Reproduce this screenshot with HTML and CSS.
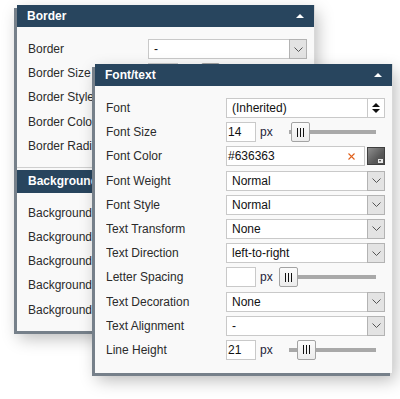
FILE: index.html
```html
<!DOCTYPE html>
<html>
<head>
<meta charset="utf-8">
<link rel="stylesheet" href="styles.css">
</head>
<body>
<div class="desk">

  <section class="panel panel-back">
    <header class="panel-head"><span>Border</span><i class="collapse"></i></header>
    <div class="panel-body panel-body-split">
      <div class="row"><label>Border</label>
        <div class="select"><span class="val">-</span><span class="arrow"><svg width="9" height="5" viewBox="0 0 9 5"><polyline points="0.5,0.5 4.5,4.5 8.5,0.5" fill="none" stroke="#555" stroke-width="1"/></svg></span></div>
      </div>
      <div class="row"><label>Border Size</label>
        <div class="num"><span class="input input-sm"></span><span class="unit">px</span>
          <span class="slider"><span class="track"></span><span class="thumb" style="left:-10px"><svg width="7" height="9" viewBox="0 0 7 9"><path d="M0.5 0v9M3.5 0v9M6.5 0v9" stroke="#111" stroke-width="1"/></svg></span></span></div>
      </div>
      <div class="row"><label>Border Style</label>
        <div class="select"><span class="val">None</span><span class="arrow"><svg width="9" height="5" viewBox="0 0 9 5"><polyline points="0.5,0.5 4.5,4.5 8.5,0.5" fill="none" stroke="#555" stroke-width="1"/></svg></span></div>
      </div>
      <div class="row"><label>Border Color</label>
        <div class="color"><span class="input input-color"><span class="val"></span></span><span class="swatch"><i></i></span></div>
      </div>
      <div class="row"><label>Border Radius</label>
        <div class="num"><span class="input input-sm"></span><span class="unit">px</span>
          <span class="slider"><span class="track"></span><span class="thumb" style="left:-10px"><svg width="7" height="9" viewBox="0 0 7 9"><path d="M0.5 0v9M3.5 0v9M6.5 0v9" stroke="#111" stroke-width="1"/></svg></span></span></div>
      </div>
    </div>
    <header class="panel-head panel-head-sub"><span>Background</span></header>
    <div class="panel-body panel-body-bg">
      <div class="row"><label>Background Color</label>
        <div class="color"><span class="input input-color"><span class="val"></span></span><span class="swatch"><i></i></span></div>
      </div>
      <div class="row"><label>Background Image</label>
        <div class="select"><span class="val">None</span><span class="arrow"><svg width="9" height="5" viewBox="0 0 9 5"><polyline points="0.5,0.5 4.5,4.5 8.5,0.5" fill="none" stroke="#555" stroke-width="1"/></svg></span></div>
      </div>
      <div class="row"><label>Background Repeat</label>
        <div class="select"><span class="val">-</span><span class="arrow"><svg width="9" height="5" viewBox="0 0 9 5"><polyline points="0.5,0.5 4.5,4.5 8.5,0.5" fill="none" stroke="#555" stroke-width="1"/></svg></span></div>
      </div>
      <div class="row"><label>Background Position</label>
        <div class="select"><span class="val">-</span><span class="arrow"><svg width="9" height="5" viewBox="0 0 9 5"><polyline points="0.5,0.5 4.5,4.5 8.5,0.5" fill="none" stroke="#555" stroke-width="1"/></svg></span></div>
      </div>
      <div class="row"><label>Background Attachment</label>
        <div class="select"><span class="val">-</span><span class="arrow"><svg width="9" height="5" viewBox="0 0 9 5"><polyline points="0.5,0.5 4.5,4.5 8.5,0.5" fill="none" stroke="#555" stroke-width="1"/></svg></span></div>
      </div>
    </div>
  </section>

  <section class="panel panel-front">
    <header class="panel-head"><span>Font/text</span><i class="collapse"></i></header>
    <div class="panel-body panel-body-front">
      <div class="row"><label>Font</label>
        <div class="select select-plain"><span class="val val-font">(Inherited)</span><span class="arrow arrow-plain"><svg width="8" height="10" viewBox="0 0 8 10"><polygon points="0,4 4,0 8,4" fill="#111"/><polygon points="0,6 8,6 4,10" fill="#111"/></svg></span></div>
      </div>
      <div class="row"><label>Font Size</label>
        <div class="num"><span class="input input-sm">14</span><span class="unit">px</span>
          <span class="slider"><span class="track"></span><span class="thumb" style="left:2px"><svg width="7" height="9" viewBox="0 0 7 9"><path d="M0.5 0v9M3.5 0v9M6.5 0v9" stroke="#111" stroke-width="1"/></svg></span></span></div>
      </div>
      <div class="row"><label>Font Color</label>
        <div class="color"><span class="input input-color"><span class="val">#636363</span><svg class="clear" width="7" height="7" viewBox="0 0 7 7"><path d="M0.5 0.5L6.5 6.5M6.5 0.5L0.5 6.5" stroke="#e0601c" stroke-width="1.1"/></svg></span><span class="swatch"><i></i></span></div>
      </div>
      <div class="row"><label>Font Weight</label>
        <div class="select"><span class="val">Normal</span><span class="arrow"><svg width="9" height="5" viewBox="0 0 9 5"><polyline points="0.5,0.5 4.5,4.5 8.5,0.5" fill="none" stroke="#555" stroke-width="1"/></svg></span></div>
      </div>
      <div class="row"><label>Font Style</label>
        <div class="select"><span class="val">Normal</span><span class="arrow"><svg width="9" height="5" viewBox="0 0 9 5"><polyline points="0.5,0.5 4.5,4.5 8.5,0.5" fill="none" stroke="#555" stroke-width="1"/></svg></span></div>
      </div>
      <div class="row"><label>Text Transform</label>
        <div class="select"><span class="val">None</span><span class="arrow"><svg width="9" height="5" viewBox="0 0 9 5"><polyline points="0.5,0.5 4.5,4.5 8.5,0.5" fill="none" stroke="#555" stroke-width="1"/></svg></span></div>
      </div>
      <div class="row"><label>Text Direction</label>
        <div class="select"><span class="val">left-to-right</span><span class="arrow"><svg width="9" height="5" viewBox="0 0 9 5"><polyline points="0.5,0.5 4.5,4.5 8.5,0.5" fill="none" stroke="#555" stroke-width="1"/></svg></span></div>
      </div>
      <div class="row"><label>Letter Spacing</label>
        <div class="num"><span class="input input-sm"></span><span class="unit">px</span>
          <span class="slider"><span class="track"></span><span class="thumb" style="left:-10px"><svg width="7" height="9" viewBox="0 0 7 9"><path d="M0.5 0v9M3.5 0v9M6.5 0v9" stroke="#111" stroke-width="1"/></svg></span></span></div>
      </div>
      <div class="row"><label>Text Decoration</label>
        <div class="select"><span class="val">None</span><span class="arrow"><svg width="9" height="5" viewBox="0 0 9 5"><polyline points="0.5,0.5 4.5,4.5 8.5,0.5" fill="none" stroke="#555" stroke-width="1"/></svg></span></div>
      </div>
      <div class="row"><label>Text Alignment</label>
        <div class="select"><span class="val">-</span><span class="arrow"><svg width="9" height="5" viewBox="0 0 9 5"><polyline points="0.5,0.5 4.5,4.5 8.5,0.5" fill="none" stroke="#555" stroke-width="1"/></svg></span></div>
      </div>
      <div class="row"><label>Line Height</label>
        <div class="num"><span class="input input-sm">21</span><span class="unit">px</span>
          <span class="slider"><span class="track"></span><span class="thumb" style="left:8px"><svg width="7" height="9" viewBox="0 0 7 9"><path d="M0.5 0v9M3.5 0v9M6.5 0v9" stroke="#111" stroke-width="1"/></svg></span></span></div>
      </div>
    </div>
  </section>

</div>
</body>
</html>
```

FILE: styles.css
```css
* { box-sizing: border-box; }

html, body {
  margin: 0;
  padding: 0;
  background: #ffffff;
}

body {
  font-family: "Liberation Sans", Arial, sans-serif;
  font-size: 12px;
  color: #2b2b2b;
}

.desk {
  position: relative;
  width: 400px;
  height: 399px;
  overflow: hidden;
}

.panel {
  position: absolute;
  width: 298px;
  background: #f9f9f9;
  border-right: 1px solid #d9d9d9;
  box-shadow: -3px 3px 0 #76808a, 2px 7px 16px rgba(0, 0, 0, 0.28);
}

.panel-back {
  left: 17px;
  top: 5px;
}

.panel-front {
  left: 95px;
  top: 64px;
}

.panel-head {
  display: flex;
  align-items: center;
  justify-content: space-between;
  height: 22px;
  padding: 0 10px 0 10px;
  background: #28455e;
  color: #ffffff;
  font-weight: bold;
  font-size: 12px;
}

.panel-head-sub {
  height: 23px;
  margin-top: 2px;
  padding-left: 11px;
}

.collapse {
  display: block;
  width: 0;
  height: 0;
  border-left: 4px solid transparent;
  border-right: 4px solid transparent;
  border-bottom: 4px solid #ffffff;
  margin-top: -1px;
}

.panel-body {
  display: flex;
  flex-direction: column;
  gap: 4.2px;
  padding: 12px 7px 13px 11px;
}

.panel-body-split {
  padding-bottom: 11px;
  border-bottom: 1px solid #cfcfcf;
}

.panel-body-bg {
  padding-top: 10px;
  padding-bottom: 11px;
}

.row {
  display: grid;
  grid-template-columns: 120px 159px;
  align-items: center;
  height: 20px;
}

.row label {
  white-space: nowrap;
  overflow: hidden;
  color: #2b2b2b;
}

/* select */
.select {
  display: flex;
  align-items: stretch;
  height: 20px;
  background: #ffffff;
  border: 1px solid #c9c9c9;
}

.select .val {
  flex: 1;
  padding-left: 5px;
  line-height: 18px;
  color: #111111;
  white-space: nowrap;
}

.select .arrow {
  display: flex;
  align-items: center;
  justify-content: center;
  width: 18px;
  margin: -1px -1px -1px 0;
  background: #e3e3e3;
  border: 1px solid #b3b3b3;
}

.select-plain .arrow-plain {
  width: 17px;
  margin: 0;
  background: #ffffff;
  border: none;
  border-left: 1px solid #c9c9c9;
}

.val-font {
  color: #161650;
}

/* number + slider */
.num {
  display: flex;
  align-items: center;
  height: 20px;
}

.input {
  display: block;
  height: 20px;
  background: #ffffff;
  border: 1px solid #c9c9c9;
  line-height: 18px;
  color: #111111;
}

.input-sm {
  width: 30px;
  padding-left: 1px;
}

.unit {
  margin-left: 4px;
  width: 12px;
  color: #1f1f3a;
}

.slider {
  position: relative;
  display: block;
  width: 87px;
  height: 20px;
  margin-left: 17px;
}

.track {
  position: absolute;
  left: 0;
  right: 0;
  top: 8px;
  height: 4px;
  background: #a9a9a9;
}

.thumb {
  position: absolute;
  top: 0;
  width: 19px;
  height: 20px;
  display: flex;
  align-items: center;
  justify-content: center;
  background: linear-gradient(#fbfbfb, #ececec);
  border: 1px solid #a3a3a3;
  border-radius: 2px;
}

/* color */
.color {
  display: flex;
  align-items: center;
  height: 20px;
}

.input-color {
  display: flex;
  align-items: center;
  flex: 1;
  padding: 0 9px 0 1px;
}

.input-color .val {
  flex: 1;
}

.clear {
  display: block;
}

.swatch {
  position: relative;
  display: block;
  width: 18px;
  height: 18px;
  margin-left: 2px;
  border: 1px solid #3f3f3f;
  background: linear-gradient(135deg, #8e8e8e 0%, #5a5a5a 60%, #4a4a4a 100%);
}

.swatch i {
  position: absolute;
  right: 1px;
  bottom: 1px;
  width: 5px;
  height: 4px;
  background: #e8e8e8;
}

.swatch i::after {
  content: "";
  position: absolute;
  left: 1px;
  top: 1px;
  border-left: 1.5px solid transparent;
  border-right: 1.5px solid transparent;
  border-top: 2px solid #333;
}
```
